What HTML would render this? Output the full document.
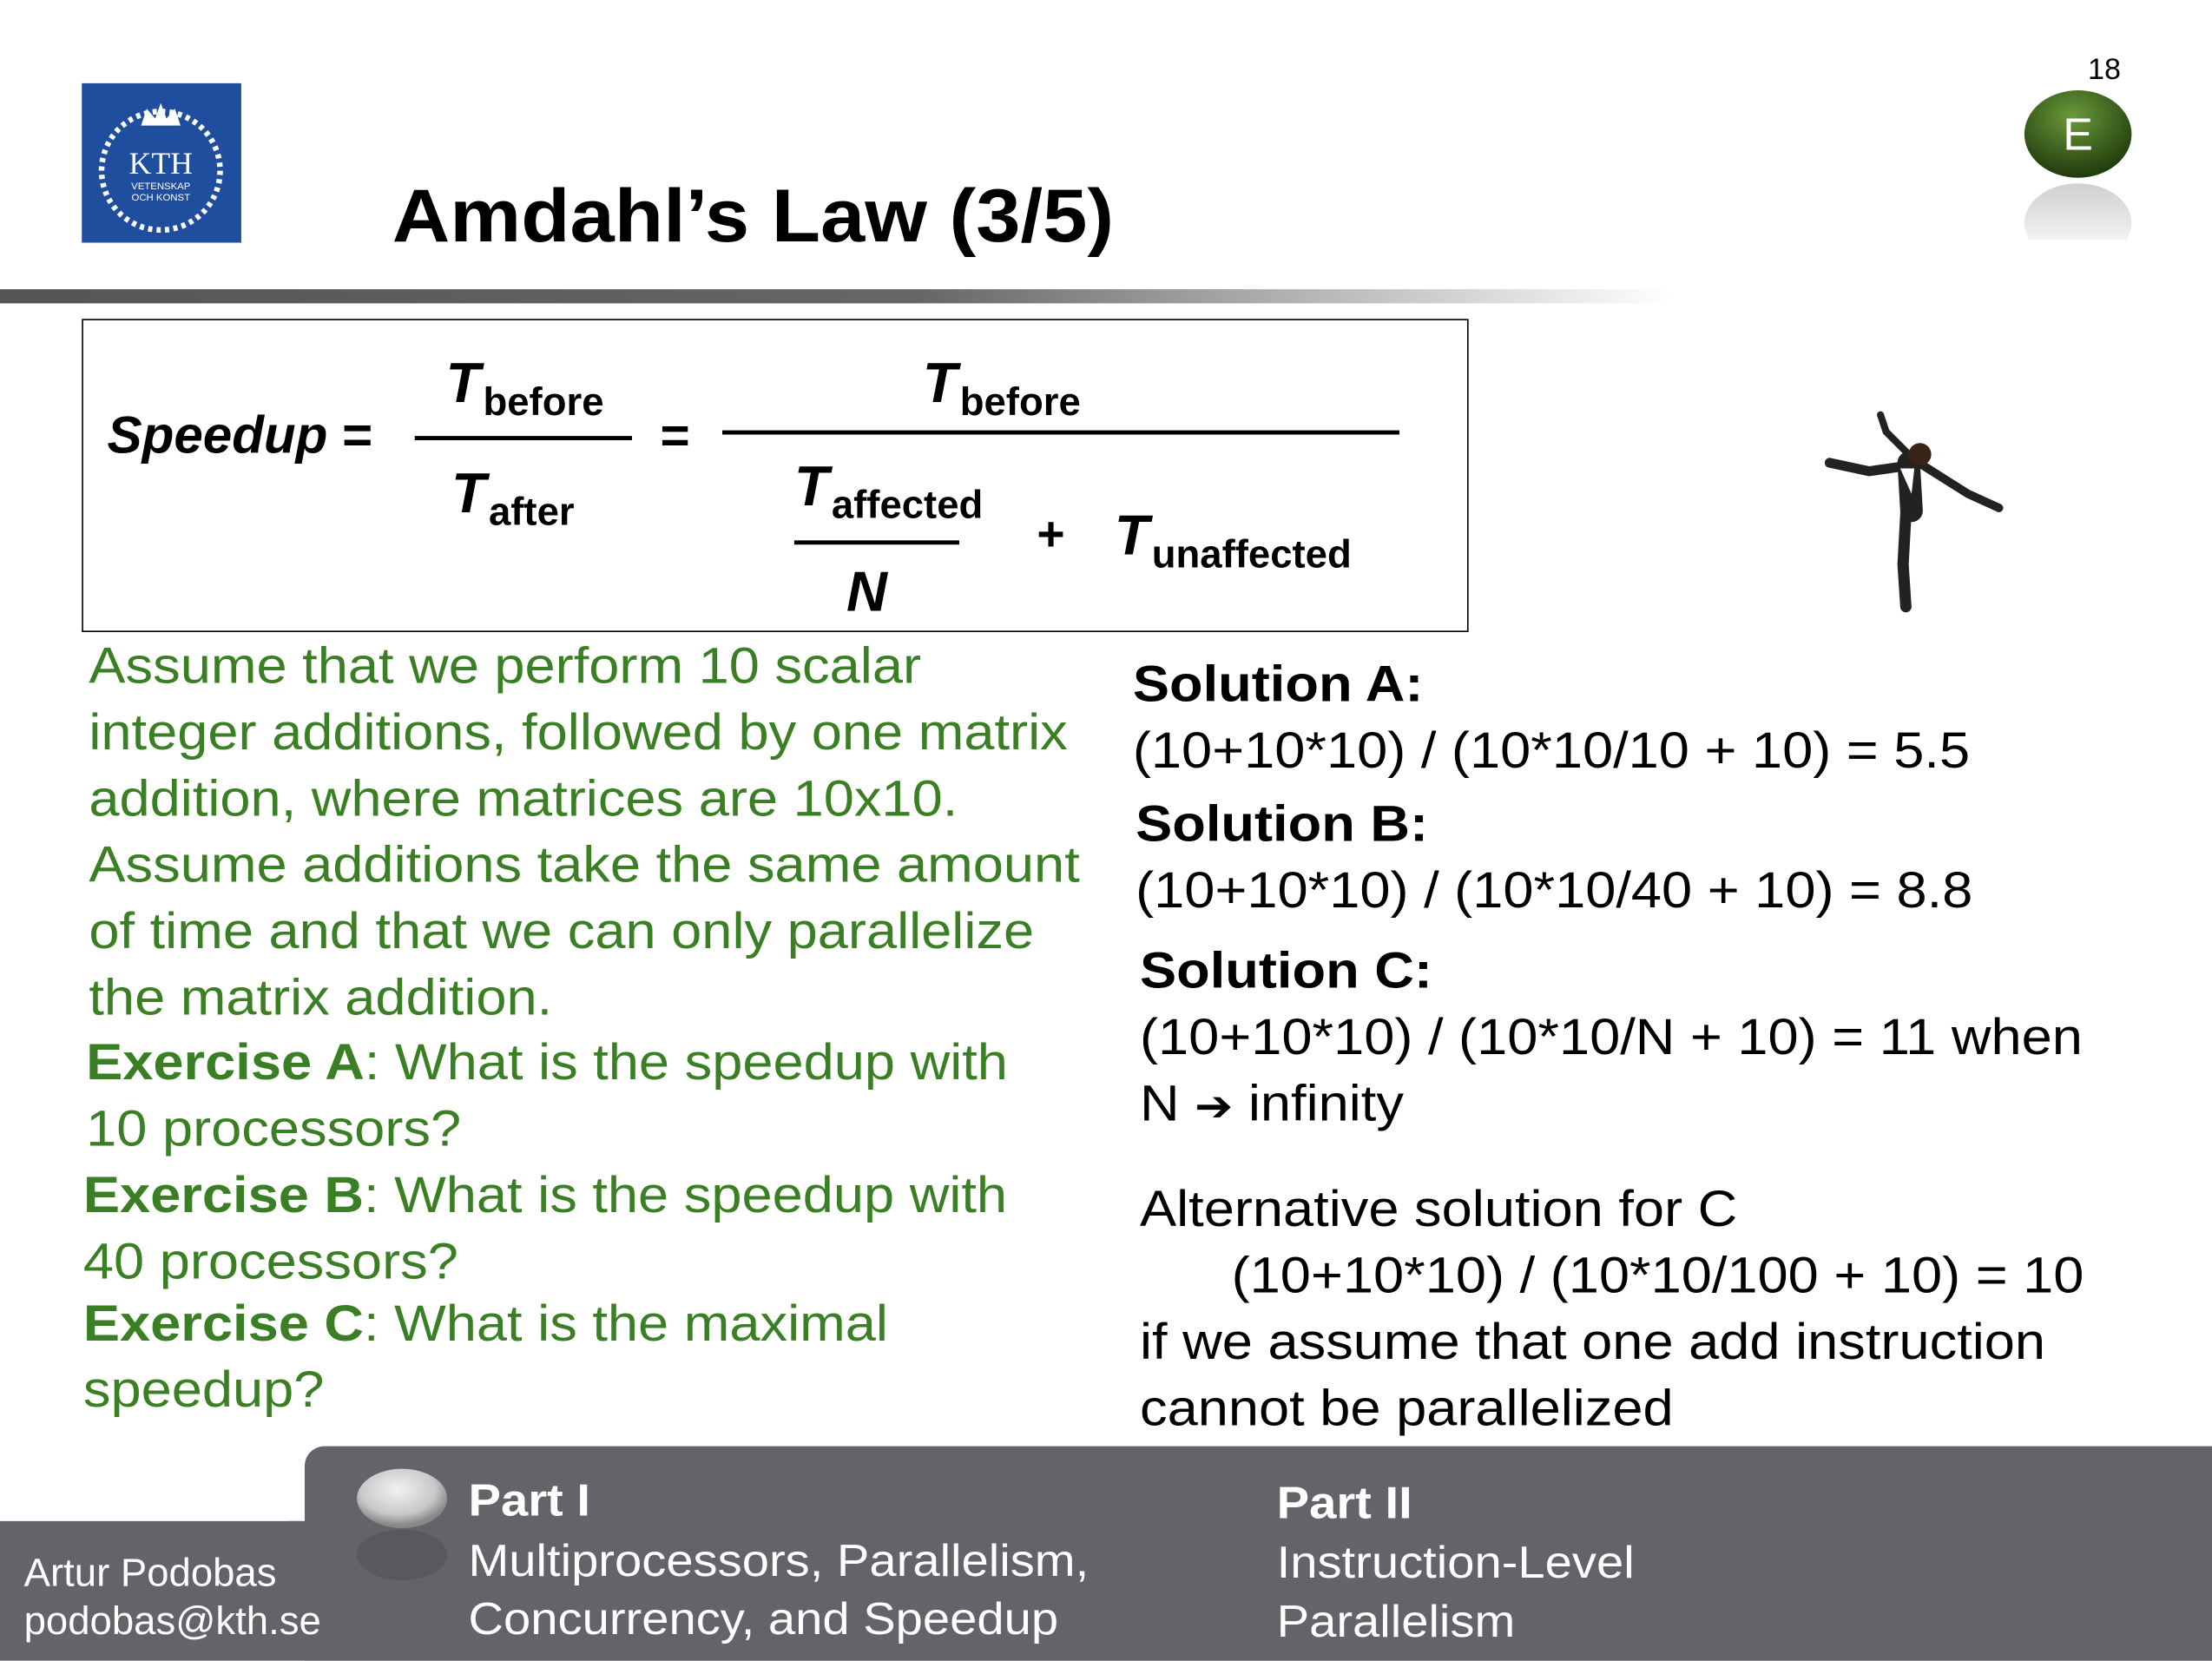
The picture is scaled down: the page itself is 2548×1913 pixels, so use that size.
<!DOCTYPE html>
<html><head><meta charset="utf-8"><style>
html,body{margin:0;padding:0;background:#fff;}
body{width:2548px;height:1912px;overflow:hidden;position:relative;}
#s{position:absolute;left:0;top:0;width:1568px;height:1177px;transform:scale(1.625);transform-origin:0 0;font-family:"Liberation Sans",Arial,sans-serif;}
.a{position:absolute;white-space:nowrap;}
.x{transform:scaleX(1.08);transform-origin:0 0;}
.g{color:#3a7f24;font-size:36px;line-height:40px;}
.k{color:#000;font-size:36px;line-height:40px;}
.f{color:#fff;font-size:32px;line-height:36px;}
.T{font-weight:bold;font-style:italic;font-size:40px;}
.sub{font-weight:bold;font-size:28px;font-style:normal;vertical-align:-9px;margin-left:2px;}
.fl{position:absolute;height:3px;background:#000;}
</style></head><body><div id="s">
<div class="a" style="left:58px;top:59px;width:113px;height:113px;background:#1f4e9f;"></div>
<svg class="a" style="left:58px;top:59px" width="113" height="113" viewBox="0 0 113 113">
<circle cx="56" cy="62" r="42" fill="none" stroke="#fff" stroke-width="4" stroke-dasharray="3 3"/>
<path d="M42 30 L46 18 L52 25 L56 14 L60 25 L66 18 L70 30 Z" fill="#fff"/>
<text x="56" y="64" fill="#fff" font-family="Liberation Serif" font-size="22" text-anchor="middle">KTH</text>
<text x="56" y="75" fill="#fff" font-size="7" text-anchor="middle" font-family="Liberation Sans">VETENSKAP</text>
<text x="56" y="83" fill="#fff" font-size="7" text-anchor="middle" font-family="Liberation Sans">OCH KONST</text>
</svg>
<div class="a" style="left:278px;top:124px;font-size:53px;font-weight:bold;line-height:60px;transform:scaleX(1.07);transform-origin:0 0;">Amdahl’s Law (3/5)</div>
<div class="a" style="left:1480px;top:38px;font-size:21px;">18</div>
<svg class="a" style="left:1430px;top:60px" width="90" height="120">
<defs><radialGradient id="eg" cx="0.45" cy="0.3" r="0.7"><stop offset="0" stop-color="#6a9a3a"/><stop offset="1" stop-color="#1f3a0c"/></radialGradient>
<linearGradient id="er" x1="0" y1="0" x2="0" y2="1"><stop offset="0" stop-color="#bbb"/><stop offset="1" stop-color="#fff"/></linearGradient></defs>
<ellipse cx="43" cy="35" rx="38" ry="31" fill="url(#eg)"/>
<ellipse cx="43" cy="98" rx="38" ry="28" fill="url(#er)" opacity="0.7"/>
<rect x="0" y="110" width="90" height="12" fill="#fff"/>
<text x="43" y="46" fill="#fff" font-size="32" text-anchor="middle" font-family="Liberation Sans">E</text>
</svg>
<div class="a" style="left:0;top:205px;width:1185px;height:10px;background:linear-gradient(90deg,#555 0%,#666 55%,#fff 100%);"></div>
<div class="a" style="left:58px;top:226px;width:981px;height:220px;border:1.5px solid #000;"></div>
<div class="a T" style="left:76px;top:288px;font-size:37px;">Speedup <span style="font-style:normal">=</span></div>
<div class="a T" style="left:316px;top:250px;">T<span class="sub">before</span></div>
<div class="fl" style="left:294px;top:309px;width:154px;"></div>
<div class="a T" style="left:320px;top:328px;">T<span class="sub">after</span></div>
<div class="a" style="left:468px;top:288px;font-size:36px;font-weight:bold;">=</div>
<div class="a T" style="left:654px;top:250px;">T<span class="sub">before</span></div>
<div class="fl" style="left:512px;top:305px;width:480px;"></div>
<div class="a T" style="left:563px;top:323px;">T<span class="sub">affected</span></div>
<div class="fl" style="left:563px;top:383px;width:117px;"></div>
<div class="a T" style="left:600px;top:398px;">N</div>
<div class="a" style="left:735px;top:360px;font-size:34px;font-weight:bold;">+</div>
<div class="a T" style="left:790px;top:358px;">T<span class="sub">unaffected</span></div>
<svg class="a" style="left:1285px;top:290px" width="140" height="150" viewBox="0 0 140 150">
<g stroke="#222" stroke-linecap="round" fill="none">
<path d="M68 40 L40 44 L12 38" stroke-width="7"/>
<path d="M68 32 L52 16 L48 4" stroke-width="5"/>
<path d="M72 36 L110 60 L132 70" stroke-width="6"/>
<path d="M68 38 L70 72" stroke-width="16"/>
<path d="M66 74 L64 110 L66 140" stroke-width="8"/>
</g>
<circle cx="76" cy="32" r="8" fill="#3a2418"/>
<path d="M62 42 L72 42 L70 60 Z" fill="#fff"/>
</svg>
<div class="a g x" style="left:63px;top:452px;">Assume that we perform 10 scalar</div>
<div class="a g x" style="left:63px;top:499px;">integer additions, followed by one matrix</div>
<div class="a g x" style="left:63px;top:546px;">addition, where matrices are 10x10.</div>
<div class="a g x" style="left:63px;top:593px;">Assume additions take the same amount</div>
<div class="a g x" style="left:63px;top:640px;">of time and that we can only parallelize</div>
<div class="a g x" style="left:63px;top:687px;">the matrix addition.</div>
<div class="a g x" style="left:61px;top:733px;"><b>Exercise A</b>: What is the speedup with</div>
<div class="a g x" style="left:61px;top:780px;">10 processors?</div>
<div class="a g x" style="left:59px;top:827px;"><b>Exercise B</b>: What is the speedup with</div>
<div class="a g x" style="left:59px;top:874px;">40 processors?</div>
<div class="a g x" style="left:59px;top:918px;"><b>Exercise C</b>: What is the maximal</div>
<div class="a g x" style="left:59px;top:965px;">speedup?</div>
<div class="a k x" style="left:803px;top:465px;font-weight:bold;">Solution A:</div>
<div class="a k x" style="left:803px;top:512px;">(10+10*10) / (10*10/10 + 10) = 5.5</div>
<div class="a k x" style="left:805px;top:564px;font-weight:bold;">Solution B:</div>
<div class="a k x" style="left:805px;top:611px;">(10+10*10) / (10*10/40 + 10) = 8.8</div>
<div class="a k x" style="left:808px;top:668px;font-weight:bold;">Solution C:</div>
<div class="a k x" style="left:808px;top:715px;">(10+10*10) / (10*10/N + 10) = 11 when</div>
<div class="a k x" style="left:808px;top:762px;">N <span style="font-family:'DejaVu Sans';font-size:30px;">➔</span> infinity</div>
<div class="a k x" style="left:808px;top:837px;">Alternative solution for C</div>
<div class="a k x" style="left:873px;top:884px;">(10+10*10) / (10*10/100 + 10) = 10</div>
<div class="a k x" style="left:808px;top:931px;">if we assume that one add instruction</div>
<div class="a k x" style="left:808px;top:978px;">cannot be parallelized</div>
<div class="a" style="left:0;top:1078px;width:1568px;height:99px;background:#636369;"></div>
<div class="a" style="left:216px;top:1025px;width:1352px;height:152px;background:#636369;border-top-left-radius:14px;"></div>
<div class="a" style="left:0;top:1040px;width:216px;height:38px;background:#fff;border-bottom-right-radius:14px;"></div>
<svg class="a" style="left:250px;top:1040px" width="72" height="80">
<defs><radialGradient id="bg" cx="0.45" cy="0.35" r="0.6"><stop offset="0" stop-color="#f2f2f2"/><stop offset="0.7" stop-color="#c8c8c8"/><stop offset="1" stop-color="#888"/></radialGradient></defs>
<ellipse cx="35" cy="22" rx="32" ry="21" fill="url(#bg)"/>
<ellipse cx="35" cy="62" rx="32" ry="18" fill="#58585e"/>
</svg>
<div class="a f" style="left:17px;top:1097px;font-size:28px;">Artur Podobas</div>
<div class="a f" style="left:17px;top:1131px;font-size:28px;">podobas@kth.se</div>
<div class="a f x" style="left:332px;top:1045px;font-weight:bold;">Part I</div>
<div class="a f x" style="left:332px;top:1088px;">Multiprocessors, Parallelism,</div>
<div class="a f x" style="left:332px;top:1129px;">Concurrency, and Speedup</div>
<div class="a f x" style="left:905px;top:1047px;font-weight:bold;">Part II</div>
<div class="a f x" style="left:905px;top:1089px;">Instruction-Level</div>
<div class="a f x" style="left:905px;top:1131px;">Parallelism</div>
</div></body></html>
